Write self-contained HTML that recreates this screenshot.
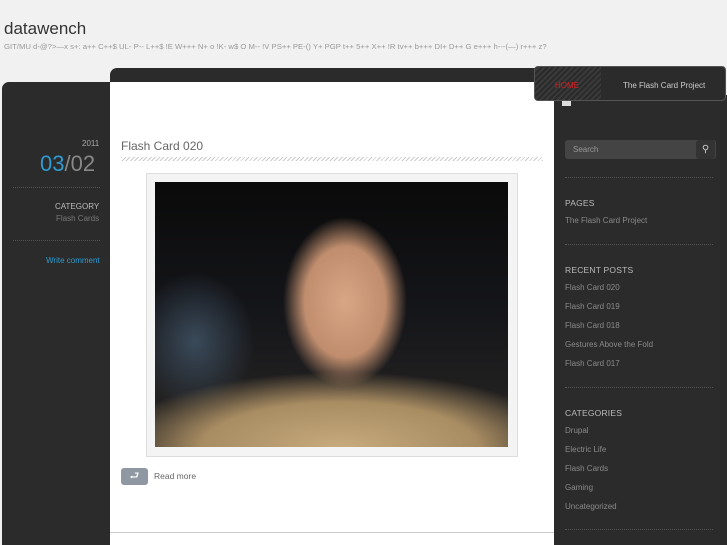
<!DOCTYPE html>
<html><head><meta charset="utf-8"><style>
*{margin:0;padding:0;box-sizing:border-box}
body{width:727px;height:545px;overflow:hidden;background:#f1f1f1;font-family:"Liberation Sans",sans-serif;position:relative}
.a{position:absolute}
.hatch{background:repeating-linear-gradient(135deg,#2a2a2a 0 2px,#3a3a3a 2px 4px)}
.dots{border-top:1px dotted #555;height:0}
.sb{color:#8a8a8a;font-size:8px}
.sh{color:#bbb;font-size:8.5px;letter-spacing:.2px}
</style></head><body>
<div class="a" style="left:4px;top:19px;font-size:17px;color:#333">datawench</div>
<div class="a" style="left:4px;top:42px;font-size:7.7px;color:#999;white-space:nowrap">GIT/MU d-@?&gt;—x s+: a++ C++$ UL- P-- L++$ !E W+++ N+ o !K- w$ O M-- !V PS++ PE-() Y+ PGP t++ 5++ X++ !R tv++ b+++ DI+ D++ G e+++ h---(—) r+++ z?</div>
<div class="a" style="left:2px;top:82px;width:109px;height:463px;background:#2b2b2b;border-radius:7px 0 0 0"></div>
<div class="a" style="left:110px;top:68px;width:445px;height:16px;background:#2b2b2b;border-radius:7px 0 0 0"></div>
<div class="a" style="left:110px;top:82px;width:444px;height:463px;background:#fff"></div>
<div class="a" style="left:110px;top:532px;width:444px;height:1px;background:#ccc"></div>
<div class="a" style="left:554px;top:95px;width:173px;height:450px;background:#2b2b2b"></div>
<div class="a" style="left:534px;top:66px;width:192px;height:35px;background:#2b2b2b;border-radius:4px;border:1px solid #555;overflow:hidden">
<div class="a hatch" style="left:0;top:0;width:66px;height:35px"></div>
<div class="a" style="left:20px;top:14px;font-size:8px;color:#d42020">HOME</div>
<div class="a" style="left:88px;top:14px;font-size:8px;color:#ccc">The Flash Card Project</div></div>
<div class="a" style="left:562px;top:101px;width:9px;height:5px;background:#ddd"></div>
<div class="a" style="left:82px;top:139px;font-size:8px;color:#aaa">2011</div>
<div class="a" style="left:40px;top:151px;font-size:22px;color:#888"><span style="color:#2e9ad0">03</span>/02</div>
<div class="a dots" style="left:13px;top:187px;width:87px"></div>
<div class="a" style="left:55px;top:202px;font-size:8px;color:#bbb">CATEGORY</div>
<div class="a" style="left:56px;top:214px;font-size:8px;color:#777">Flash Cards</div>
<div class="a dots" style="left:13px;top:240px;width:87px"></div>
<div class="a" style="left:46px;top:256px;font-size:8px;color:#2e9ad0">Write comment</div>
<div class="a" style="left:121px;top:139px;font-size:12px;color:#666">Flash Card 020</div>
<div class="a" style="left:121px;top:157px;width:422px;height:4px;background:repeating-linear-gradient(135deg,#ccc 0 1px,#fff 1px 3px)"></div>
<div class="a" style="left:146px;top:173px;width:372px;height:284px;background:#f4f4f4;border:1px solid #ddd"></div>
<div class="a" style="left:155px;top:182px;width:353px;height:265px;background:radial-gradient(ellipse 62px 85px at 190px 120px,#d8a585 0,#c08e6e 65%,rgba(120,90,70,0) 100%),radial-gradient(ellipse 230px 75px at 185px 265px,#c7ab7e 0,#a88c62 60%,rgba(0,0,0,0) 100%),radial-gradient(ellipse 60px 70px at 40px 160px,#3a4a5a 0,rgba(0,0,0,0) 100%),linear-gradient(180deg,#0a0a0a 0,#15161a 50%,#2a2724 100%)"></div>
<div class="a" style="left:121px;top:468px;width:27px;height:17px;background:#8f97a3;border-radius:3px;color:#fff;font-size:11px;text-align:center;line-height:17px">⮐</div>
<div class="a" style="left:154px;top:471px;font-size:8.5px;color:#666">Read more</div>
<div class="a" style="left:565px;top:140px;width:151px;height:19px;background:#444;border-radius:3px"></div>
<div class="a" style="left:696px;top:140px;width:19px;height:19px;background:#333;border-radius:3px;color:#ccc;font-size:10px;text-align:center;line-height:19px">⚲</div>
<div class="a sb" style="left:573px;top:145px;color:#999">Search</div>
<div class="a dots" style="left:565px;top:177px;width:148px"></div>
<div class="a sh" style="left:565px;top:198px">PAGES</div>
<div class="a sb" style="left:565px;top:216px">The Flash Card Project</div>
<div class="a dots" style="left:565px;top:244px;width:148px"></div>
<div class="a sh" style="left:565px;top:265px">RECENT POSTS</div>
<div class="a sb" style="left:565px;top:283px">Flash Card 020</div>
<div class="a sb" style="left:565px;top:302px">Flash Card 019</div>
<div class="a sb" style="left:565px;top:321px">Flash Card 018</div>
<div class="a sb" style="left:565px;top:340px">Gestures Above the Fold</div>
<div class="a sb" style="left:565px;top:359px">Flash Card 017</div>
<div class="a dots" style="left:565px;top:387px;width:148px"></div>
<div class="a sh" style="left:565px;top:408px">CATEGORIES</div>
<div class="a sb" style="left:565px;top:426px">Drupal</div>
<div class="a sb" style="left:565px;top:445px">Electric Life</div>
<div class="a sb" style="left:565px;top:464px">Flash Cards</div>
<div class="a sb" style="left:565px;top:483px">Gaming</div>
<div class="a sb" style="left:565px;top:502px">Uncategorized</div>
<div class="a dots" style="left:565px;top:529px;width:148px"></div>
</body></html>
